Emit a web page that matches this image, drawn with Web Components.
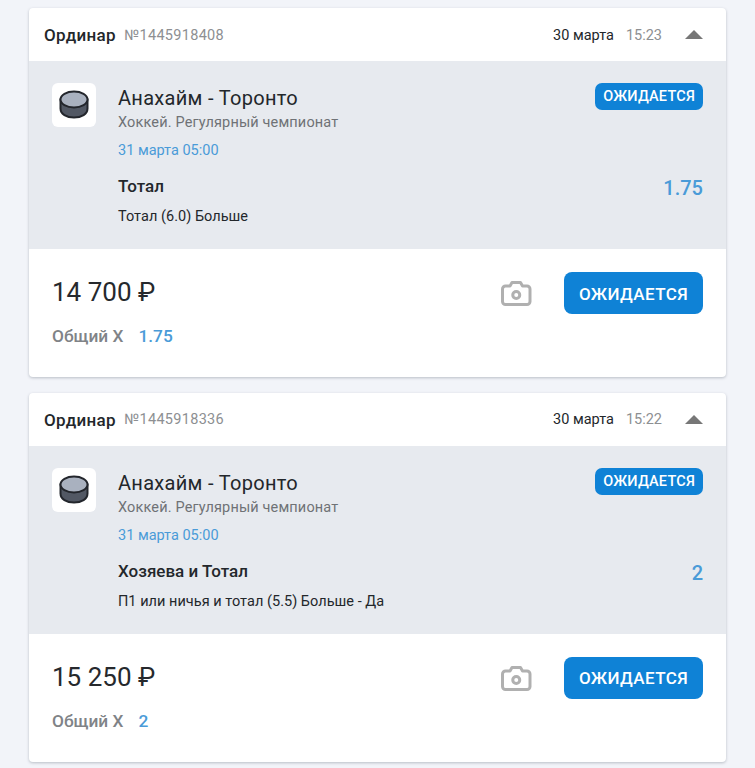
<!DOCTYPE html>
<html><head><meta charset="utf-8">
<style>
html,body{margin:0;padding:0;background:#f2f4f9;}
body{font-family:Roboto,"Liberation Sans",sans-serif;height:768px;overflow:hidden;}
bet-list{display:flex;flex-direction:column;gap:15.5px;padding:8px 29px 0;}
</style></head><body>
<template id="puck-t"><style>
:host{display:flex;width:44px;height:44px;background:#fff;border-radius:6px;align-items:center;justify-content:center;flex:none}
svg{display:block}
</style><svg width="30" height="30" viewBox="0 0 30 30"><path d="M1.500 9.500v9c0 5.500 6 9 13.500 9s13.500-3.500 13.500-9v-9z" fill="#525864" stroke="#23262c" stroke-width="2"/><ellipse cx="15" cy="9.500" rx="13.500" ry="8" fill="#a9b1bf" stroke="#23262c" stroke-width="2"/></svg></template>

<template id="card-t"><style>
:host{display:block;background:#fff;border-radius:4px;box-shadow:0 1px 3px rgba(40,50,70,.28);overflow:hidden;color:#23272b}
.head{height:53px;display:flex;align-items:center;padding:1px 23px 0 15px;box-sizing:border-box;font-size:14.500px}
.type{font-size:17px;font-weight:500;letter-spacing:.3px}
.num{color:#8d8f92;margin-left:8.500px;letter-spacing:.3px}
.date{margin-left:auto}
.time{color:#8d8f92;margin-left:12px}
.tri{margin-left:23px;width:0;height:0;border-left:9px solid transparent;border-right:9px solid transparent;border-bottom:9px solid #777;margin-top:-1px}
.body{background:#e7eaef;height:188px;box-sizing:border-box;padding:22px 23px 0 23px;display:flex;gap:22px;position:relative}
.info{flex:1;display:flex;flex-direction:column;align-items:flex-start}
.match{font-size:20px;line-height:24px;margin-top:3px;font-weight:400;letter-spacing:.3px}
.league{font-size:14.500px;line-height:17px;color:#6f7276;margin-top:4px;letter-spacing:.15px}
.when{font-size:14.500px;line-height:17px;color:#4a9bd8;margin-top:11px}
.market{font-size:17px;font-weight:500;line-height:20px;margin-top:17px}
.pick{font-size:14.500px;line-height:17px;margin-top:12px;letter-spacing:.03px}
.right{display:flex;flex-direction:column;align-items:flex-end}
.badge{background:#0f82d6;color:#fff;font-size:14.500px;font-weight:500;line-height:27px;height:27px;padding:0 8px;border-radius:7px;letter-spacing:.2px}
.odd{font-size:20px;line-height:24px;font-weight:500;color:#4a9bd8;margin-top:66px}
.foot{height:128px;box-sizing:border-box;padding:23px 23px 0;display:flex;align-items:flex-start}
.left{flex:1}
.amount{font-size:26px;line-height:40px;color:#26292d}
.total{margin-top:14px;font-size:17.300px;line-height:20px;font-weight:500;color:#808387;display:flex;gap:15px}
.total b{font-weight:500;color:#4a9bd8}
.cam{display:block;margin:8px 32px 0 0}
.btn{width:139px;height:42px;background:#0f82d6;color:#fff;border-radius:8px;display:flex;align-items:center;justify-content:center;font-size:17px;font-weight:500;letter-spacing:.4px;padding-top:1px;box-sizing:border-box}
</style>
<div class="head"><span class="type">Ординар</span><span class="num"><slot name="num"></slot></span><span class="date"><slot name="date"></slot></span><span class="time"><slot name="time"></slot></span><span class="tri"></span></div>
<div class="body"><bet-puck></bet-puck>
<div class="info"><div class="match">Анахайм - Торонто</div><div class="league">Хоккей. Регулярный чемпионат</div><div class="when">31 марта 05:00</div><div class="market"><slot name="market"></slot></div><div class="pick"><slot name="pick"></slot></div></div>
<div class="right"><div class="badge">ОЖИДАЕТСЯ</div><div class="odd"><slot name="odd"></slot></div></div></div>
<div class="foot"><div class="left"><div class="amount"><slot name="amount"></slot></div><div class="total"><span>Общий Х</span><b><slot name="total"></slot></b></div></div>
<svg class="cam" width="32" height="27" viewBox="0 0 32 27" fill="none" stroke="#b0b0b0"><path d="M5.500 6h4.500l2-3.500h8.500l2 3.500h4.500a3 3 0 0 1 3 3v12.500a3 3 0 0 1-3 3H5.500a3 3 0 0 1-3-3V9a3 3 0 0 1 3-3z" stroke-width="3" stroke-linejoin="round"/><circle cx="16.250" cy="15" r="3.500" stroke-width="3"/></svg>
<div class="btn">ОЖИДАЕТСЯ</div></div>
</template>

<bet-list>
<bet-card><span slot="num">№1445918408</span><span slot="date">30 марта</span><span slot="time">15:23</span><span slot="market">Тотал</span><span slot="pick">Тотал (6.0) Больше</span><span slot="odd">1.75</span><span slot="amount">14 700 ₽</span><span slot="total">1.75</span></bet-card>
<bet-card><span slot="num">№1445918336</span><span slot="date">30 марта</span><span slot="time">15:22</span><span slot="market">Хозяева и Тотал</span><span slot="pick">П1 или ничья и тотал (5.5) Больше - Да</span><span slot="odd">2</span><span slot="amount">15 250 ₽</span><span slot="total">2</span></bet-card>
</bet-list>
<script>
function def(name,id){customElements.define(name,class extends HTMLElement{constructor(){super();this.attachShadow({mode:"open"}).appendChild(document.getElementById(id).content.cloneNode(true));}});}
def("bet-puck","puck-t");
def("bet-card","card-t");
</script>
</body></html>
